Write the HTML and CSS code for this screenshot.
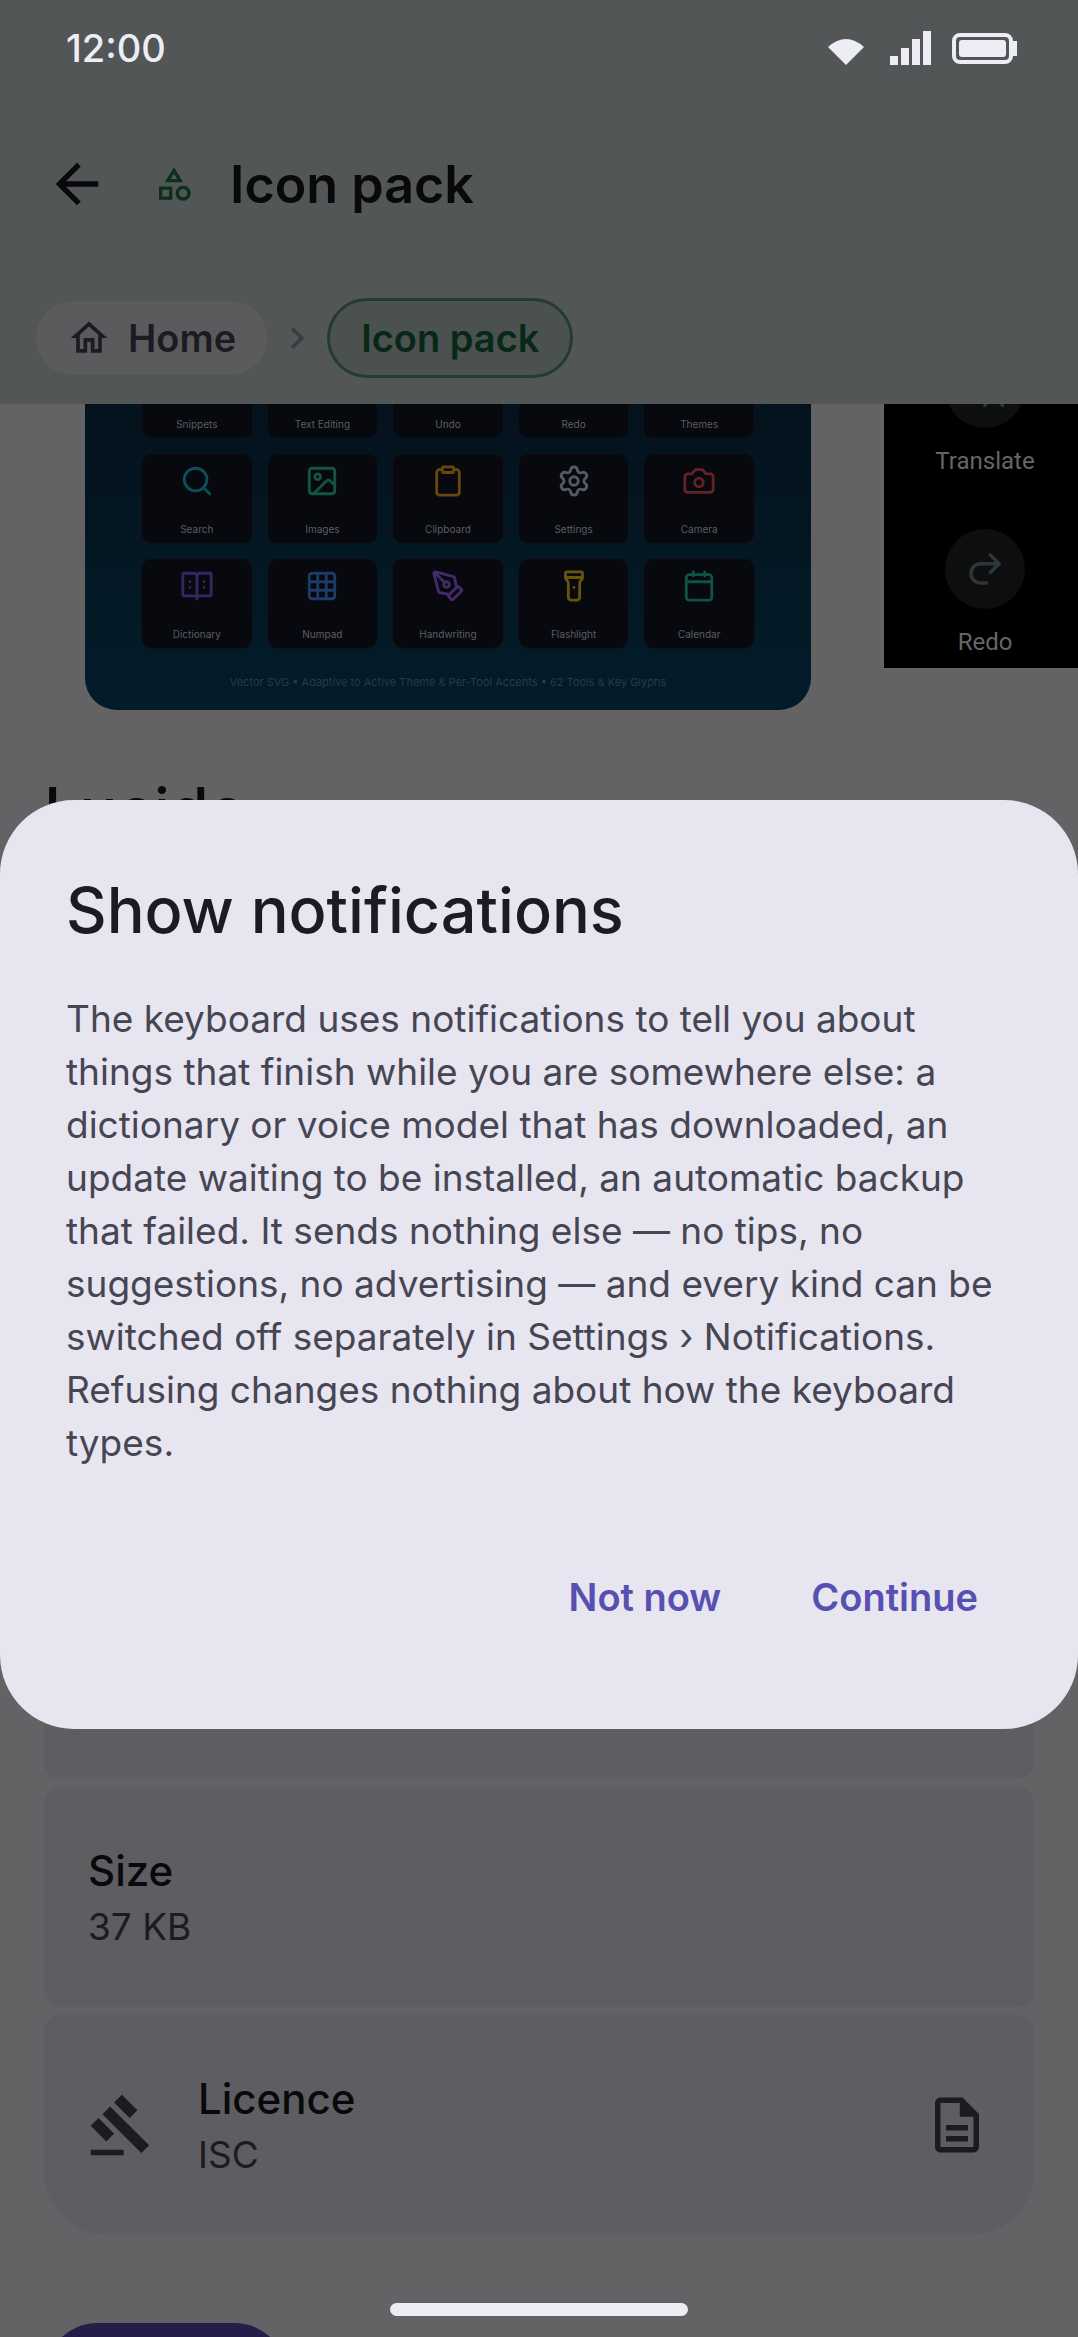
FILE: index.html
```html
<!DOCTYPE html>
<html lang="en">
<head>
    <meta charset="UTF-8">
    <meta name="viewport" content="width=device-width, initial-scale=1.0">
    <title>Icon pack</title>
    <link rel="stylesheet" href="styles.css">
</head>
<body>
    <div class="screen">
        <!-- App bar and breadcrumbs -->
        <header class="header">
            <div class="status-bar">
                <span class="clock">12:00</span>
                <svg class="wifi" viewBox="0 0 36 36"><path d="M0 17Q18 1 36 17L18 35Z"/></svg>
                <svg class="signal" viewBox="0 0 42 36"><path d="M0 26h8v9H0zM11 18h8v17h-8zM22 9h8v26h-8zM33 1h8v34h-8z"/></svg>
                <svg class="battery" viewBox="0 0 65 36">
                    <rect x="2" y="5" width="57" height="27" rx="6" fill="none" stroke="currentColor" stroke-width="4"/>
                    <rect x="7" y="10" width="47" height="17" rx="3"/>
                    <path d="M60 11h5v15h-5z"/>
                </svg>
            </div>
            <div class="app-bar">
                <button class="back" type="button" aria-label="Back">
                    <svg viewBox="0 0 24 24"><path d="M20 11H7.83l5.59-5.59L12 4l-8 8 8 8 1.41-1.41L7.83 13H20v-2z"/></svg>
                </button>
                <svg class="category" viewBox="0 0 24 24"><path d="m12 2-5.5 9h11L12 2zm0 3.84L13.93 9h-3.87L12 5.84zM17.5 13c-2.49 0-4.5 2.01-4.5 4.5s2.01 4.5 4.5 4.5 4.5-2.01 4.5-4.5-2.01-4.5-4.5-4.5zm0 7c-1.38 0-2.5-1.12-2.5-2.5s1.12-2.5 2.5-2.5 2.5 1.12 2.5 2.5-1.12 2.5-2.5 2.5zM3 21.5h8v-8H3v8zm2-6h4v4H5v-4z"/></svg>
                <h1>Icon pack</h1>
            </div>
            <nav class="breadcrumbs">
                <a class="chip" href="#">
                    <svg viewBox="0 0 24 24"><path d="m12 5.69 5 4.5V18h-2v-6H9v6H7v-7.81l5-4.5M12 3 2 12h3v8h6v-6h2v6h6v-8h3L12 3z"/></svg>
                    Home
                </a>
                <svg class="chevron" viewBox="0 0 24 24"><path d="M10 6 8.59 7.41 13.17 12l-4.58 4.59L10 18l6-6z"/></svg>
                <a class="chip current" href="#">Icon pack</a>
            </nav>
        </header>

        <main class="content">
            <div class="gallery">
                <div class="preview">
                    <div class="tools">
                        <div class="tool"><span>Snippets</span></div>
                        <div class="tool"><span>Text Editing</span></div>
                        <div class="tool"><span>Undo</span></div>
                        <div class="tool"><span>Redo</span></div>
                        <div class="tool"><span>Themes</span></div>

                        <div class="tool">
                            <svg class="cyan" viewBox="0 0 24 24"><circle cx="11" cy="11" r="8"/><path d="m21 21-4.3-4.3"/></svg>
                            <span>Search</span>
                        </div>
                        <div class="tool">
                            <svg class="green" viewBox="0 0 24 24"><rect x="3" y="3" width="18" height="18" rx="2"/><circle cx="9" cy="9" r="2"/><path d="m21 15-3.086-3.086a2 2 0 0 0-2.828 0L6 21"/></svg>
                            <span>Images</span>
                        </div>
                        <div class="tool">
                            <svg class="amber" viewBox="0 0 24 24"><rect x="8" y="2" width="8" height="4" rx="1"/><path d="M16 4h2a2 2 0 0 1 2 2v14a2 2 0 0 1-2 2H6a2 2 0 0 1-2-2V6a2 2 0 0 1 2-2h2"/></svg>
                            <span>Clipboard</span>
                        </div>
                        <div class="tool">
                            <svg class="grey" viewBox="0 0 24 24"><path d="M9.671 4.136a2.34 2.34 0 0 1 4.659 0 2.34 2.34 0 0 0 3.319 1.915 2.34 2.34 0 0 1 2.33 4.033 2.34 2.34 0 0 0 0 3.831 2.34 2.34 0 0 1-2.33 4.033 2.34 2.34 0 0 0-3.319 1.915 2.34 2.34 0 0 1-4.659 0 2.34 2.34 0 0 0-3.32-1.915 2.34 2.34 0 0 1-2.33-4.033 2.34 2.34 0 0 0 0-3.831A2.34 2.34 0 0 1 6.35 6.051a2.34 2.34 0 0 0 3.319-1.915"/><circle cx="12" cy="12" r="3"/></svg>
                            <span>Settings</span>
                        </div>
                        <div class="tool">
                            <svg class="red" viewBox="0 0 24 24"><path d="M14.5 4h-5L7 7H4a2 2 0 0 0-2 2v9a2 2 0 0 0 2 2h16a2 2 0 0 0 2-2V9a2 2 0 0 0-2-2h-3l-2.5-3z"/><circle cx="12" cy="13" r="3"/></svg>
                            <span>Camera</span>
                        </div>

                        <div class="tool">
                            <svg class="indigo" viewBox="0 0 24 24"><path d="M12 5v16M3 19a1 1 0 0 1-1-1V4a1 1 0 0 1 1-1h7a2 2 0 0 1 2 2 2 2 0 0 1 2-2h7a1 1 0 0 1 1 1v14a1 1 0 0 1-1 1h-7a2 2 0 0 0-2 2 2 2 0 0 0-2-2zM7 9h.01M7 13h.01M17 9h.01M17 13h.01"/></svg>
                            <span>Dictionary</span>
                        </div>
                        <div class="tool">
                            <svg class="blue" viewBox="0 0 24 24"><rect x="3" y="3" width="18" height="18" rx="2"/><path d="M3 9h18M3 15h18M9 3v18M15 3v18"/></svg>
                            <span>Numpad</span>
                        </div>
                        <div class="tool">
                            <svg class="violet" viewBox="0 0 24 24"><path d="M15.707 21.293a1 1 0 0 1-1.414 0l-1.586-1.586a1 1 0 0 1 0-1.414l5.586-5.586a1 1 0 0 1 1.414 0l1.586 1.586a1 1 0 0 1 0 1.414z"/><path d="m18 13-1.375-6.874a1 1 0 0 0-.746-.776L3.235 2.028a1 1 0 0 0-1.207 1.207L5.35 15.879a1 1 0 0 0 .776.746L13 18M2.3 2.3l7.286 7.286"/><circle cx="11" cy="11" r="2"/></svg>
                            <span>Handwriting</span>
                        </div>
                        <div class="tool">
                            <svg class="yellow" viewBox="0 0 24 24"><path d="M18 6c0 2-2 2-2 4v10a2 2 0 0 1-2 2h-4a2 2 0 0 1-2-2V10c0-2-2-2-2-4V3a1 1 0 0 1 1-1h10a1 1 0 0 1 1 1zM6 6h12M12 13v.01"/></svg>
                            <span>Flashlight</span>
                        </div>
                        <div class="tool">
                            <svg class="teal" viewBox="0 0 24 24"><path d="M8 2v3M16 2v3M3 9h18"/><rect x="3" y="4" width="18" height="18" rx="2"/></svg>
                            <span>Calendar</span>
                        </div>
                    </div>
                    <p class="caption">Vector SVG • Adaptive to Active Theme &amp; Per-Tool Accents • 62 Tools &amp; Key Glyphs</p>
                </div>

                <div class="shot">
                    <div class="shot-item">
                        <span class="round translate"><svg viewBox="0 0 24 24"><path d="m22 22-5-10-5 10M14 18h6"/></svg></span>
                        Translate
                    </div>
                    <div class="shot-item">
                        <span class="round"><svg viewBox="0 0 24 24"><path d="m15 14 5-5-5-5"/><path d="M20 9H9.5a5.5 5.5 0 0 0 0 11H13"/></svg></span>
                        Redo
                    </div>
                </div>
            </div>

            <h2 class="pack-name">Lucide</h2>

            <div class="details">
                <div class="row"></div>
                <div class="row">
                    <div class="row-text">
                        <span class="label">Size</span>
                        <span class="value">37 KB</span>
                    </div>
                </div>
                <div class="row">
                    <svg viewBox="0 0 24 24"><path d="M1 21h12v2H1v-2zM5.24 8.07l2.83-2.83 14.14 14.14-2.83 2.83L5.24 8.07zM12.32 1l5.66 5.66-2.83 2.83-5.66-5.66L12.32 1zM3.83 9.48l5.66 5.66-2.83 2.83L1 12.31l2.83-2.83z"/></svg>
                    <div class="row-text">
                        <span class="label">Licence</span>
                        <span class="value">ISC</span>
                    </div>
                    <svg viewBox="0 0 24 24"><path d="M8 16h8v2H8zm0-4h8v2H8zm6-10H6c-1.1 0-2 .9-2 2v16c0 1.1.89 2 1.99 2H18c1.1 0 2-.9 2-2V8l-6-6zm4 18H6V4h7v5h5v11z"/></svg>
                </div>
            </div>

            <button class="action" type="button" aria-label="Apply"></button>
        </main>
    </div>

    <!-- Notification permission dialog -->
    <div class="overlay">
        <div class="dialog" role="dialog" aria-modal="true" aria-labelledby="dialog-title">
            <h2 id="dialog-title">Show notifications</h2>
            <p>The keyboard uses notifications to tell you about things that finish while you are somewhere else: a dictionary or voice model that has downloaded, an update waiting to be installed, an automatic backup that failed. It sends nothing else — no tips, no suggestions, no advertising — and every kind can be switched off separately in Settings › Notifications. Refusing changes nothing about how the keyboard types.</p>
            <div class="dialog-actions">
                <button type="button">Not now</button>
                <button type="button">Continue</button>
            </div>
        </div>
    </div>

    <div class="home-indicator"></div>
</body>
</html>
```

FILE: styles.css
```css
* {
    box-sizing: border-box;
}

body {
    margin: 0;
    font-family: Inter, "Noto Sans", sans-serif;
    font-optical-sizing: none;
    background-color: #636264;
    color: #09090c;
}

h1, h2, p {
    margin: 0;
}

button {
    font-family: inherit;
    border: none;
    padding: 0;
    background: none;
    color: inherit;
    cursor: pointer;
}

a {
    color: inherit;
    text-decoration: none;
}

svg {
    display: block;
    flex: none;
    fill: currentColor;
}

.screen {
    height: 100vh;
    overflow: hidden;
}

/* Header */
.header {
    background-color: #535657;
    padding-bottom: 26px;
}

.status-bar {
    display: flex;
    align-items: center;
    height: 96px;
    padding: 0 61px 0 66px;
    color: #eeecf4;
}

.clock {
    flex: 1;
    font-size: 38px;
    font-weight: 500;
}

.wifi {
    width: 36px;
    height: 36px;
    margin-right: 26px;
}

.signal {
    width: 42px;
    height: 36px;
    margin-right: 20px;
}

.battery {
    width: 65px;
    height: 36px;
}

.app-bar {
    display: flex;
    align-items: center;
    height: 176px;
    padding: 0 45px;
}

.back svg {
    width: 64px;
    height: 64px;
}

.category {
    width: 40px;
    height: 40px;
    margin: 0 36px 0 45px;
    color: #0a3019;
}

h1 {
    font-size: 52px;
    font-weight: 600;
    font-optical-sizing: auto;
}

.breadcrumbs {
    display: flex;
    align-items: center;
    gap: 8px;
    padding: 26px 36px 0;
}

.chip {
    display: flex;
    align-items: center;
    gap: 17px;
    height: 74px;
    padding: 0 31px;
    border-radius: 40px;
    background-color: #5b5b5e;
    color: #1c1b21;
    font-size: 38px;
    font-weight: 600;
}

.chip svg {
    width: 44px;
    height: 44px;
}

.chip.current {
    height: 80px;
    border: 3px solid #243b32;
    background-color: #4a514e;
    color: #082817;
}

.chevron {
    width: 44px;
    height: 44px;
    color: #3a3c3e;
}

/* Gallery */
.gallery {
    display: flex;
    align-items: flex-start;
    gap: 73px;
    padding-left: 85px;
    overflow: hidden;
}

.preview {
    flex: none;
    width: 726px;
    height: 306px;
    overflow: hidden;
    padding: 0 56px;
    border-radius: 0 0 32px 32px;
    background: linear-gradient(#04121d, #031c2a);
}

.tools {
    display: grid;
    grid-template-columns: repeat(5, 1fr);
    gap: 14px;
    margin-top: -56px;
}

.tool {
    display: flex;
    flex-direction: column;
    align-items: center;
    height: 91px;
    padding: 10px 0 7px;
    border: 1px solid #0b121b;
    border-radius: 11px;
    background-color: #07090f;
    color: #5c5e62;
    font-size: 10px;
    line-height: 14px;
}

.tool span {
    margin-top: auto;
}

.tool svg {
    width: 34px;
    height: 34px;
    fill: none;
    stroke: currentColor;
    stroke-width: 2;
    stroke-linecap: round;
    stroke-linejoin: round;
}

.cyan { color: #0c4e5a; }
.green { color: #145542; }
.amber { color: #684708; }
.grey { color: #565962; }
.red { color: #642226; }
.indigo { color: #322964; }
.blue { color: #1d3a68; }
.violet { color: #44296b; }
.yellow { color: #655609; }
.teal { color: #0e5344; }

.caption {
    margin-top: 25px;
    color: #2a3a44;
    font-size: 11px;
    font-optical-sizing: auto;
    line-height: 16px;
    text-align: center;
    white-space: nowrap;
}

.shot {
    flex: none;
    width: 726px;
    height: 264px;
    overflow: hidden;
    background-color: #000;
    color: #666;
    font-family: Roboto, sans-serif;
    font-size: 24px;
    line-height: 32px;
}

.shot-item {
    display: flex;
    flex-direction: column;
    align-items: center;
    gap: 17px;
    width: 202px;
    margin-bottom: 52px;
}

.shot-item:first-child {
    margin-top: -56px;
}

.round {
    display: flex;
    align-items: center;
    justify-content: center;
    width: 80px;
    height: 80px;
    border-radius: 50%;
    background-color: #0e0e0e;
    color: #2c373c;
}

.round.translate {
    color: #1c3d49;
}

.round svg {
    width: 42px;
    height: 42px;
    fill: none;
    stroke: currentColor;
    stroke-width: 2;
    stroke-linecap: round;
    stroke-linejoin: round;
}

/* Pack details */
.pack-name {
    margin: 58px 44px 707px;
    font-size: 63px;
    font-weight: 500;
    font-optical-sizing: auto;
    line-height: 84px;
}

.details {
    display: flex;
    flex-direction: column;
    gap: 8px;
    margin: 0 44px 88px;
}

.row {
    display: flex;
    align-items: center;
    gap: 44px;
    height: 220px;
    padding: 0 44px;
    border-radius: 16px;
    background-color: #5e5d61;
    color: #1c1b21;
}

.row:last-child {
    border-radius: 16px 16px 64px 64px;
}

.row svg {
    width: 66px;
    height: 66px;
}

.row-text {
    display: flex;
    flex: 1;
    flex-direction: column;
}

.label {
    color: #09090c;
    font-size: 42px;
    font-weight: 500;
    line-height: 58px;
}

.value {
    font-size: 37px;
    line-height: 53px;
}

.action {
    display: block;
    width: 242px;
    height: 105px;
    margin-left: 45px;
    border-radius: 53px;
    background-color: #241e4a;
}

/* Dialog */
.overlay {
    position: fixed;
    inset: 0;
    display: flex;
    align-items: center;
    padding-top: 192px;
}

.dialog {
    width: 100%;
    padding: 68px 68px 69px 66px;
    border-radius: 74px;
    background-color: #e7e5f0;
}

.dialog h2 {
    color: #1b1b22;
    font-size: 63px;
    font-weight: 500;
    font-optical-sizing: auto;
    line-height: 84px;
}

.dialog p {
    margin-top: 40px;
    color: #464553;
    font-size: 37px;
    line-height: 53px;
}

.dialog-actions {
    display: flex;
    justify-content: flex-end;
    gap: 26px;
    margin-top: 65px;
}

.dialog-actions button {
    height: 126px;
    padding: 0 32px;
    color: #5850b0;
    font-size: 38px;
    font-weight: 600;
}

.home-indicator {
    position: fixed;
    bottom: 21px;
    left: 50%;
    width: 298px;
    height: 13px;
    margin-left: -149px;
    border-radius: 7px;
    background-color: #eeecf4;
}
```
